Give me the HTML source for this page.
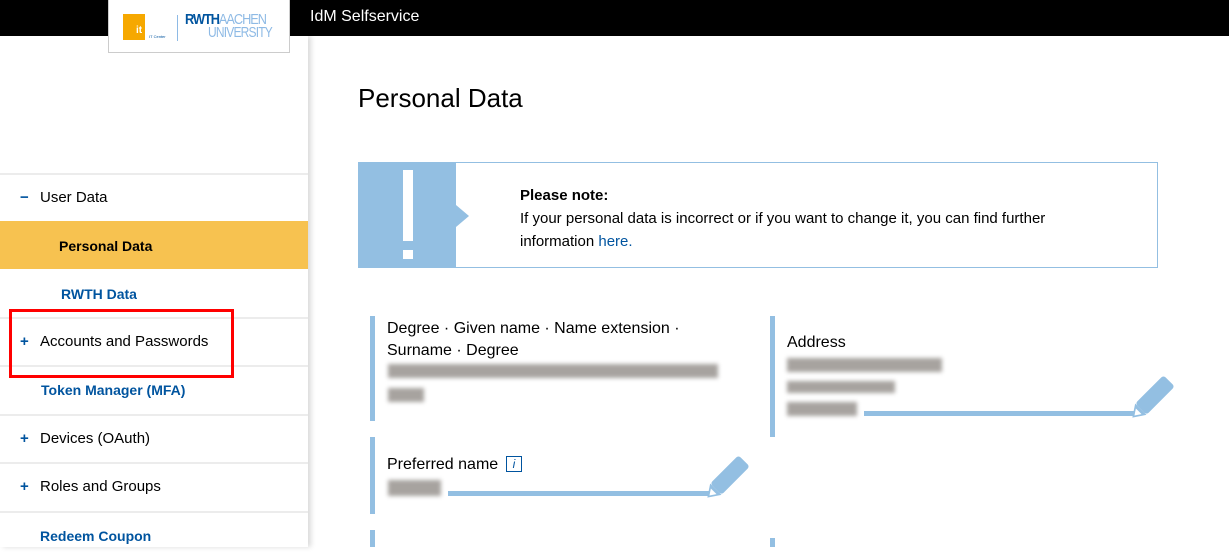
<!DOCTYPE html>
<html><head><meta charset="utf-8"><style>
*{margin:0;padding:0;box-sizing:border-box}
body{width:1229px;height:547px;overflow:hidden;background:#fff;font-family:"Liberation Sans",Arial,sans-serif;position:relative;color:#000}
.top{position:absolute;left:0;top:0;width:1229px;height:36px;background:#000}
.top span{position:absolute;left:310px;top:8px;color:#fff;font-size:16px}
.logo{position:absolute;left:108px;top:0;width:182px;height:53px;background:#fff;border:1px solid #ccc;border-top:none}
.side{position:absolute;left:0;top:36px;width:308px;height:511px;background:#fff;box-shadow:3px 0 5px rgba(0,0,0,.15)}
.nav{position:absolute;left:0;width:308px;height:48px;border-top:2px solid #ececec;font-size:15px;line-height:46px}
.blur{position:absolute;background:#8a8580;filter:blur(2px);opacity:.75}
.bar{position:absolute;width:5px;background:#93bfe2}
</style></head><body>
<div class="top"><span>IdM Selfservice</span></div>
<div class="side"></div>
<div class="logo">
 <div style="position:absolute;left:14px;top:14px;width:22px;height:26px;background:#f6a800"></div>
 <div style="position:absolute;left:27px;top:25px;color:#fff;font-size:10px;font-weight:bold">it</div>
 <div style="position:absolute;left:40px;top:34px;font-size:4px;color:#00549f">IT Center</div>
 <div style="position:absolute;left:68px;top:15px;width:1px;height:26px;background:#8ebae5"></div>
 <div style="position:absolute;left:76px;top:13px;font-size:15px;font-weight:bold;color:#00549f;letter-spacing:-1.2px;line-height:14px;transform:scaleX(.85);transform-origin:left">RWTH<span style="font-weight:normal;color:#8ebae5">AACHEN</span></div>
 <div style="position:absolute;left:99px;top:26px;font-size:15px;color:#8ebae5;letter-spacing:-1px;line-height:14px;transform:scaleX(.8);transform-origin:left">UNIVERSITY</div>
</div>
<div class="nav" style="top:173px"><span style="position:absolute;left:20px;color:#00549f;font-weight:bold">−</span><span style="position:absolute;left:40px">User Data</span></div>
<div class="nav" style="top:221px;background:#f7c250;border-top-color:#f7c250"><span style="position:absolute;left:59px;font-weight:bold;font-size:14px">Personal Data</span></div>
<div class="nav" style="top:269px;border-top-color:#fff"><span style="position:absolute;left:61px;font-weight:bold;color:#00549f;font-size:14px">RWTH Data</span></div>
<div class="nav" style="top:317px"><span style="position:absolute;left:20px;color:#00549f;font-weight:bold">+</span><span style="position:absolute;left:40px">Accounts and Passwords</span></div>
<div class="nav" style="top:365px"><span style="position:absolute;left:41px;font-weight:bold;color:#00549f;font-size:14px">Token Manager (MFA)</span></div>
<div class="nav" style="top:414px"><span style="position:absolute;left:20px;color:#00549f;font-weight:bold">+</span><span style="position:absolute;left:40px">Devices (OAuth)</span></div>
<div class="nav" style="top:462px"><span style="position:absolute;left:20px;color:#00549f;font-weight:bold">+</span><span style="position:absolute;left:40px">Roles and Groups</span></div>
<div class="nav" style="top:511px"><span style="position:absolute;left:40px;font-weight:bold;color:#00549f;font-size:14px">Redeem Coupon</span></div>
<div style="position:absolute;left:9px;top:309px;width:225px;height:69px;border:3px solid #f00"></div>

<div style="position:absolute;left:358px;top:83px;font-size:26px">Personal Data</div>
<div style="position:absolute;left:358px;top:162px;width:800px;height:106px;border:1px solid #93bfe2">
 <div style="position:absolute;left:0;top:0;width:97px;height:104px;background:#93bfe2"></div>
 <div style="position:absolute;left:97px;top:42px;width:0;height:0;border-top:11px solid transparent;border-bottom:11px solid transparent;border-left:13px solid #93bfe2"></div>
 <div style="position:absolute;left:44px;top:7px;width:10px;height:71px;background:#fff"></div>
 <div style="position:absolute;left:44px;top:87px;width:10px;height:9px;background:#fff"></div>
 <div style="position:absolute;left:161px;top:21px;font-size:15px;line-height:23px"><b>Please note:</b><br>If your personal data is incorrect or if you want to change it, you can find further<br>information <span style="color:#00549f">here.</span></div>
</div>

<div class="bar" style="left:370px;top:316px;height:105px"></div>
<div style="position:absolute;left:387px;top:318px;font-size:16px;line-height:22px">Degree · Given name · Name extension ·<br>Surname · Degree</div>
<div class="blur" style="left:388px;top:364px;width:330px;height:14px"></div>
<div class="blur" style="left:388px;top:388px;width:36px;height:14px"></div>

<div class="bar" style="left:370px;top:437px;height:77px"></div>
<div style="position:absolute;left:387px;top:456px;font-size:16px">Preferred name</div>
<div style="position:absolute;left:506px;top:456px;width:16px;height:16px;border:1px solid #00549f;color:#00549f;font-size:12px;font-style:italic;text-align:center;line-height:14px">i</div>
<div class="blur" style="left:388px;top:480px;width:53px;height:16px"></div>
<div style="position:absolute;left:448px;top:491px;width:263px;height:5px;background:#93bfe2"></div>
<svg style="position:absolute;left:705px;top:450px" width="50" height="50"><g transform="rotate(-45 8 42)"><rect x="12" y="34" width="40" height="16" rx="3" fill="#93bfe2"/><polygon points="12,34 12,50 0,42" fill="#93bfe2"/><polygon points="9,38 9,46 3,42" fill="#fff"/></g></svg>

<div class="bar" style="left:770px;top:316px;height:121px"></div>
<div style="position:absolute;left:787px;top:334px;font-size:16px">Address</div>
<div class="blur" style="left:787px;top:358px;width:155px;height:14px"></div>
<div class="blur" style="left:787px;top:381px;width:108px;height:12px"></div>
<div class="blur" style="left:787px;top:402px;width:70px;height:14px"></div>
<div style="position:absolute;left:864px;top:411px;width:272px;height:5px;background:#93bfe2"></div>
<svg style="position:absolute;left:1130px;top:370px" width="50" height="50"><g transform="rotate(-45 8 42)"><rect x="12" y="34" width="40" height="16" rx="3" fill="#93bfe2"/><polygon points="12,34 12,50 0,42" fill="#93bfe2"/><polygon points="9,38 9,46 3,42" fill="#fff"/></g></svg>

<div class="bar" style="left:370px;top:530px;height:17px"></div>
<div class="bar" style="left:770px;top:538px;height:9px"></div>
</body></html>
